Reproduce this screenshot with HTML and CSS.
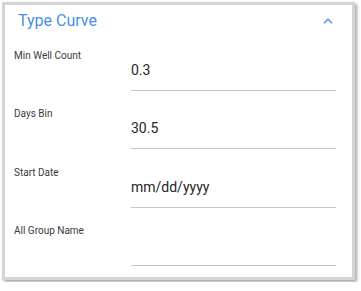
FILE: index.html
```html
<!DOCTYPE html>
<html lang="en">
<head>
	<meta charset="utf-8">
	<meta name="viewport" content="width=device-width, initial-scale=1">
	<title>Type Curve</title>
	<link rel="stylesheet" href="styles.css">
</head>
<body>
	<div class="panel">
		<div class="panel-header">
			<h2 class="panel-title">Type Curve</h2>
			<svg class="panel-toggle" width="12" height="8" viewBox="0 0 12 8">
				<path d="M2 6.2 L6 2.2 L10 6.2" fill="none" stroke="#4a8ee8" stroke-width="1.4"/>
			</svg>
		</div>
		<div class="panel-body">
			<div class="field-row">
				<label class="field-label">Min Well Count</label>
				<div class="field-input">0.3</div>
			</div>
			<div class="field-row">
				<label class="field-label">Days Bin</label>
				<div class="field-input">30.5</div>
			</div>
			<div class="field-row">
				<label class="field-label">Start Date</label>
				<div class="field-input">mm/dd/yyyy</div>
			</div>
			<div class="field-row">
				<label class="field-label">All Group Name</label>
				<div class="field-input"></div>
			</div>
		</div>
	</div>
</body>
</html>
```

FILE: styles.css
```css
:root {
	--title-color: #4a8ee8;
	--label-color: #3a3a3a;
	--value-color: #262626;
	--line-color: #c6c6c6;
	--frame-color: #d5d5d5;
}
* {
	margin: 0;
	padding: 0;
	box-sizing: border-box;
}
body {
	background: #fff;
	font-family: Roboto, "Noto Sans", sans-serif;
}
.panel {
	margin: 2px;
	width: 353px;
	height: 278px;
	border: 3px solid var(--frame-color);
	box-shadow: 2px 2px 3px rgba(0, 0, 0, 0.35);
	background: #fff;
}
.panel-header {
	display: flex;
	justify-content: space-between;
	align-items: center;
	padding: 4px 18px 0 13px;
}
.panel-title {
	font-size: 16px;
	line-height: 24px;
	font-weight: 400;
	color: var(--title-color);
}
.panel-toggle {
	display: block;
}
.panel-body {
	padding: 17px 16px 0 9px;
}
.field-row {
	display: grid;
	grid-template-columns: 117px 1fr;
	align-items: start;
	height: 58.4px;
}
.field-label {
	font-size: 10px;
	line-height: 12px;
	color: var(--label-color);
}
.field-input {
	margin-top: 10px;
	height: 31px;
	padding-bottom: 10px;
	font-size: 14px;
	line-height: 20px;
	color: var(--value-color);
	border-bottom: 1px solid var(--line-color);
}
```
